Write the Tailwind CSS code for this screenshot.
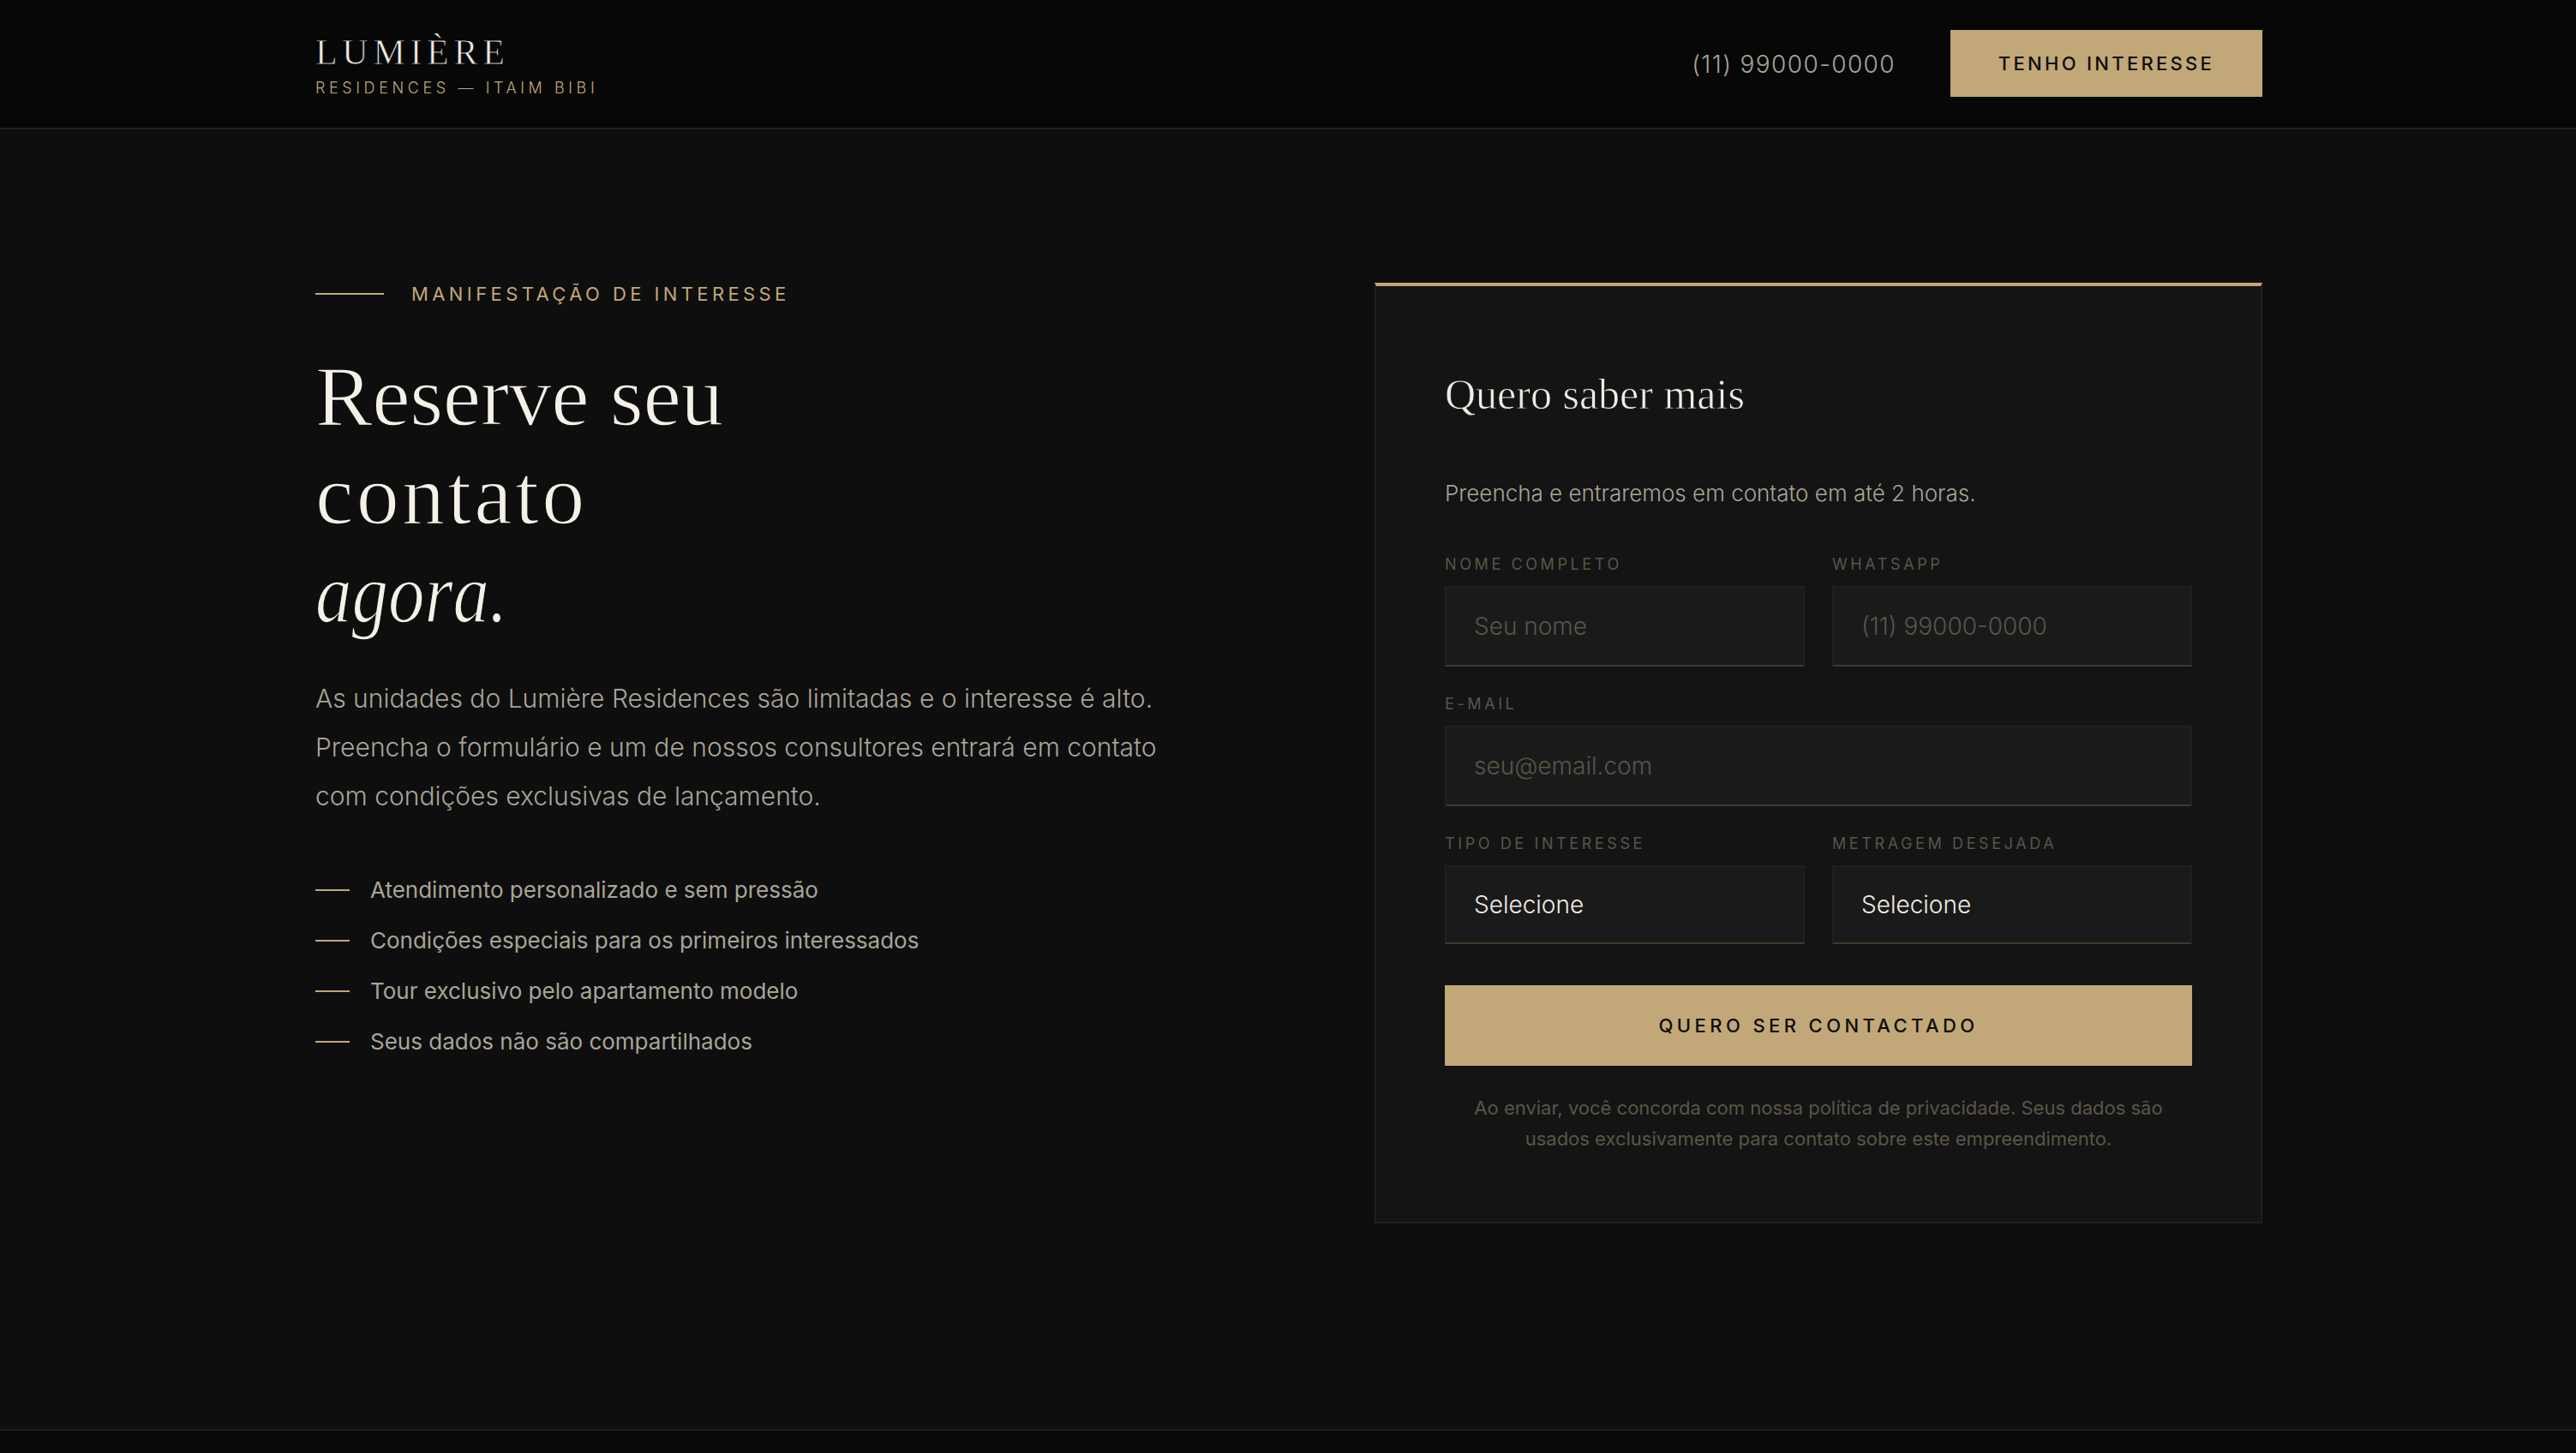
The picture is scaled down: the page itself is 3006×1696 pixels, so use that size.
<!DOCTYPE html>
<html lang="pt-BR">
<head>
    <meta charset="UTF-8">
    <meta name="viewport" content="width=device-width, initial-scale=1.0">
    <title>Lumière Residences — Itaim Bibi</title>
    <script src="https://cdn.jsdelivr.net/npm/@tailwindcss/browser@4"></script>
</head>
<body class="bg-[#0e0e0e] h-screen flex flex-col overflow-hidden font-['Inter',sans-serif] text-[#e8e4dc]">
    <!-- Cabeçalho -->
    <header class="h-[151px] shrink-0 bg-[#070707] border-b-2 border-[#1f1f1f]">
        <div class="w-[2272px] h-full ml-[368px] flex items-center justify-between">
            <div class="pt-[2px]">
                <div class="font-['Liberation_Serif',serif] text-[42px] leading-[50px] tracking-[5.7px] text-[#f0ece4] [-webkit-text-stroke:0.8px_#070707]">LUMIÈRE</div>
                <div class="mt-[5px] text-[18px] leading-[24px] font-light tracking-[4.6px] text-[#c2a878]">RESIDENCES — ITAIM BIBI</div>
            </div>
            <div class="flex items-center gap-[64px]">
                <span class="text-[28px] font-light tracking-[0.05em] text-[#a8a499]">(11) 99000-0000</span>
                <a class="mb-[1px] w-[364px] h-[78px] flex items-center justify-center bg-[#c2a878] text-[22px] font-medium tracking-[0.15em] text-[#0d0d0d]">TENHO INTERESSE</a>
            </div>
        </div>
    </header>

    <!-- Conteúdo -->
    <main class="flex-1 pt-[179px]">
        <div class="w-[2272px] ml-[368px] grid grid-cols-2 gap-[200px] items-start">
            <section>
                <div class="flex items-center gap-[32px]">
                    <span class="w-[80px] h-[2px] bg-[#c2a878]"></span>
                    <span class="text-[22px] leading-[26px] tracking-[0.2em] text-[#c2a878]">MANIFESTAÇÃO DE INTERESSE</span>
                </div>
                <h1 class="mt-[49px] font-['Liberation_Serif',serif] font-normal text-[100px] leading-[115px] text-[#f5f1e8] [-webkit-text-stroke:1.5px_#0e0e0e]"><span class="tracking-[-0.4px]">Reserve seu</span><br><span class="tracking-[3.3px]">contato</span><br><em class="inline-block origin-left scale-x-[0.85]">agora.</em></h1>
                <p class="mt-[37px] w-[1000px] text-[30px] leading-[57px] font-light text-[#a8a499]">As unidades do Lumière Residences são limitadas e o interesse é alto. Preencha o formulário e um de nossos consultores entrará em contato com condições exclusivas de lançamento.</p>
                <ul class="mt-[61px] flex flex-col gap-[19px] text-[26px] leading-[40px] text-[#a8a498]">
                    <li class="flex items-center gap-[24px]"><span class="w-[40px] h-[2px] bg-[#c2a878]"></span>Atendimento personalizado e sem pressão</li>
                    <li class="flex items-center gap-[24px]"><span class="w-[40px] h-[2px] bg-[#c2a878]"></span>Condições especiais para os primeiros interessados</li>
                    <li class="flex items-center gap-[24px]"><span class="w-[40px] h-[2px] bg-[#c2a878]"></span>Tour exclusivo pelo apartamento modelo</li>
                    <li class="flex items-center gap-[24px]"><span class="w-[40px] h-[2px] bg-[#c2a878]"></span>Seus dados não são compartilhados</li>
                </ul>
            </section>

            <!-- Formulário -->
            <form class="bg-[#141414] border-2 border-[#1f1f1f] border-t-4 border-t-[#c2a878] px-[80px] pt-[80px] pb-[79px]">
                <h2 class="font-['Liberation_Serif',serif] font-normal text-[50px] leading-[92px] text-[#f0ece4] [-webkit-text-stroke:0.8px_#141414]">Quero saber mais</h2>
                <p class="mt-[50px] text-[26px] leading-[40px] font-light text-[#a8a499]">Preencha e entraremos em contato em até 2 horas.</p>
                <div class="mt-[51px] grid grid-cols-2 gap-x-[32px] gap-y-[32px]">
                    <label class="block">
                        <span class="block text-[18px] leading-[24px] tracking-[0.2em] text-[#5a5448]">NOME COMPLETO</span>
                        <input type="text" placeholder="Seu nome" class="mt-[13px] w-full h-[94px] px-[32px] bg-[#1a1a1a] border-2 border-[#202020] border-b-[#3f3a2c] text-[28px] font-light placeholder:text-[#5a5448] outline-none">
                    </label>
                    <label class="block">
                        <span class="block text-[18px] leading-[24px] tracking-[0.2em] text-[#5a5448]">WHATSAPP</span>
                        <input type="text" placeholder="(11) 99000-0000" class="mt-[13px] w-full h-[94px] px-[32px] bg-[#1a1a1a] border-2 border-[#202020] border-b-[#3f3a2c] text-[28px] font-light placeholder:text-[#5a5448] outline-none">
                    </label>
                    <label class="block col-span-2">
                        <span class="block text-[18px] leading-[24px] tracking-[0.2em] text-[#5a5448]">E-MAIL</span>
                        <input type="text" placeholder="seu@email.com" class="mt-[13px] w-full h-[94px] px-[32px] bg-[#1a1a1a] border-2 border-[#202020] border-b-[#3f3a2c] text-[28px] font-light placeholder:text-[#5a5448] outline-none">
                    </label>
                    <label class="block">
                        <span class="block text-[18px] leading-[24px] tracking-[0.2em] text-[#5a5448]">TIPO DE INTERESSE</span>
                        <select class="mt-[13px] w-full h-[92px] px-[32px] bg-[#1a1a1a] border-2 border-[#202020] border-b-[#3f3a2c] text-[28px] font-light text-[#f0ece4] appearance-none outline-none"><option>Selecione</option></select>
                    </label>
                    <label class="block">
                        <span class="block text-[18px] leading-[24px] tracking-[0.2em] text-[#5a5448]">METRAGEM DESEJADA</span>
                        <select class="mt-[13px] w-full h-[92px] px-[32px] bg-[#1a1a1a] border-2 border-[#202020] border-b-[#3f3a2c] text-[28px] font-light text-[#f0ece4] appearance-none outline-none"><option>Selecione</option></select>
                    </label>
                </div>
                <button type="button" class="mt-[48px] w-full h-[94px] bg-[#c2a878] text-[22px] font-medium tracking-[0.2em] text-[#0d0d0d]">QUERO SER CONTACTADO</button>
                <p class="mt-[31px] px-[20px] text-center text-[22px] leading-[36px] text-[#5a5448]">Ao enviar, você concorda com nossa política de privacidade. Seus dados são usados exclusivamente para contato sobre este empreendimento.</p>
            </form>
        </div>
    </main>

    <footer class="h-[28px] shrink-0 bg-[#080808] border-t-2 border-[#1f1f1f]"></footer>
</body>
</html>
